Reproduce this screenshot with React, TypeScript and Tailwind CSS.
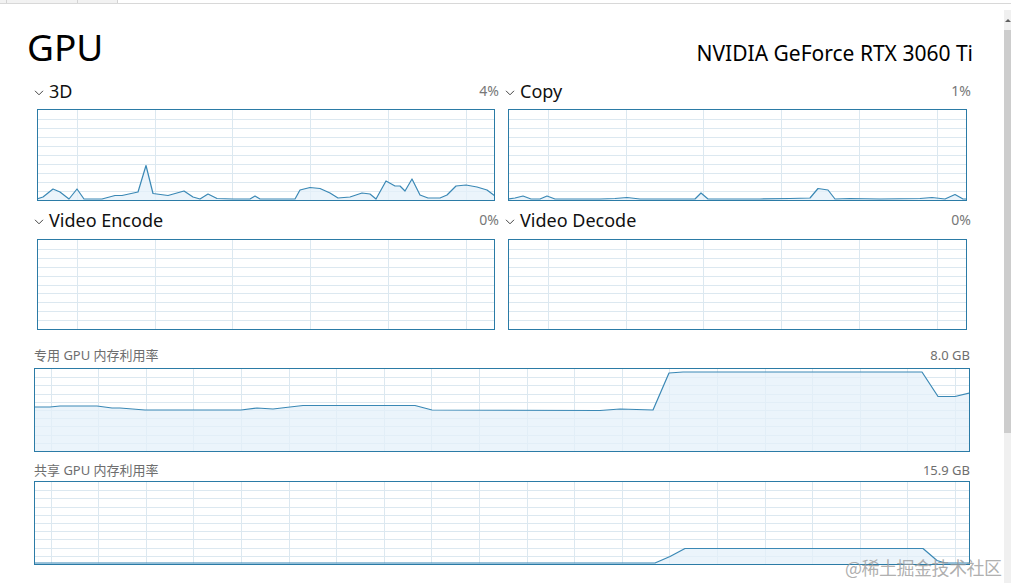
import React from 'react';

type Pt = [number, number];

const FONT = "font-['Noto_Sans','Noto_Sans_CJK_SC',sans-serif]";

// points are page coordinates, converted to the box's inner space
const Graph: React.FC<{
  left: number;
  top: number;
  w: number;
  h: number;
  pts: Pt[];
  colStart: number;
  colStep: number;
  className?: string;
}> = ({ left, top, w, h, pts, colStart, colStep, className = '' }) => {
  const iw = w - 2;
  const ih = h - 2;
  const local = pts.map(([x, y]) => [x - left - 1, y - top - 1] as Pt);
  const line = local.map(p => p.join(',')).join(' ');
  const area = `0,${ih} ${line} ${iw},${ih}`;
  const rows = Array.from({ length: 9 }, (_, i) => ((i + 1) * ih) / 10);
  const cols: number[] = [];
  for (let x = colStart; x < iw; x += colStep) cols.push(x);

  return (
    <div className={`border border-[#2b7ba6] bg-white ${className}`} style={{ width: w, height: h }}>
      <svg width={iw} height={ih} className="block">
        {rows.map(y => (
          <line key={'r' + y} x1={0} x2={iw} y1={Math.round(y) + 0.5} y2={Math.round(y) + 0.5} stroke="#dce8f0" strokeWidth={1} />
        ))}
        {cols.map(x => (
          <line key={'c' + x} x1={Math.round(x) + 0.5} x2={Math.round(x) + 0.5} y1={0} y2={ih} stroke="#dce8f0" strokeWidth={1} />
        ))}
        {pts.length > 0 && (
          <>
            <polygon points={area} fill="#e4f0f9" fillOpacity={0.75} />
            <polyline points={line} fill="none" stroke="#3a88b5" strokeWidth={1.2} strokeLinejoin="round" />
          </>
        )}
      </svg>
    </div>
  );
};

const Chevron = () => (
  <svg width="10" height="6" className="block">
    <polyline points="1,0.8 5,4.8 9,0.8" fill="none" stroke="#444" strokeWidth="1" />
  </svg>
);

const Header: React.FC<{ title: string; value: string }> = ({ title, value }) => (
  <div className="flex items-end justify-between h-[22px]">
    <div className="flex items-center">
      <div className="w-[16px] pt-[3px] pl-[1px]">
        <Chevron />
      </div>
      <span className="text-[18px] leading-[22px] text-[#111]">{title}</span>
    </div>
    <span className="text-[14px] leading-[18px] pb-[2px] text-[#777]">{value}</span>
  </div>
);

const p3d: Pt[] = [
  [37, 199], [43, 197], [53, 189], [60, 192], [69, 199], [77, 189], [84, 199], [102, 199],
  [115, 195.5], [122, 195.5], [138, 192], [146, 165.5], [153, 193.5], [168, 195.5], [184, 191],
  [193, 197], [200, 199], [208, 194], [217, 198.5], [233, 199], [250, 199], [255, 196], [260, 199],
  [295, 199], [300, 190], [310, 187.5], [320, 188.5], [330, 193], [338, 198], [350, 197],
  [362, 193], [370, 194], [376, 199], [386, 181], [395, 186], [400, 186], [405, 191], [412, 179],
  [420, 195], [428, 198], [440, 198], [447, 195], [456, 186], [466, 185], [477, 187], [487, 190], [495, 196],
];

const pCopy: Pt[] = [
  [508, 199], [515, 198], [523, 196], [531, 199], [540, 199], [547, 196], [555, 199], [600, 199],
  [615, 198.5], [627, 197.5], [640, 199], [695, 199], [701, 193], [708, 199], [760, 199],
  [790, 198.5], [810, 198], [818, 188.5], [828, 190], [835, 199], [850, 198.5], [880, 199],
  [920, 198.5], [932, 197.5], [945, 199], [955, 194.5], [963, 199], [967, 199],
];

const pVideo: Pt[] = [];

const pMem: Pt[] = [
  [34, 407], [50, 407], [60, 406], [97, 406], [112, 408], [120, 408], [145, 410], [241, 410],
  [257, 408], [273, 409], [290, 407], [303, 405.5], [415, 405.5], [432, 410], [600, 410.5],
  [620, 409], [653, 410], [669, 373], [683, 372], [922, 372], [938, 396.5], [955, 396.5], [970, 393],
];

const pShared: Pt[] = [
  [34, 563], [655, 563], [670, 556.5], [685, 548.5], [923, 548.5], [937, 560.5], [945, 563], [970, 563],
];

const App: React.FC = () => {
  return (
    <div className={`relative w-[1011px] h-[583px] overflow-hidden bg-white ${FONT}`}>
      {/* top tab strip */}
      <div className="h-[4px] border-b border-[#d8d8d8] flex">
        <div className="w-[7px] h-[3px] bg-[#f2f2f2] border-r border-[#d4d4d4]" />
        <div className="w-[71px] h-[3px] bg-[#f2f2f2] border-r border-[#d4d4d4]" />
        <div className="w-[40px] h-[3px] bg-[#f2f2f2] border-r border-[#d4d4d4]" />
      </div>

      <div className="flex">
        <div className="w-[1004px]">
          {/* title */}
          <div className="flex items-end justify-between pl-[27px] pr-[31px] h-[68px]">
            <span className="text-[37px] leading-[44px] pb-[3px] text-black">GPU</span>
            <span className="text-[21px] leading-[28px] pb-[5px] text-black">NVIDIA GeForce RTX 3060 Ti</span>
          </div>

          {/* engine graphs */}
          <div className="grid grid-cols-[466px_467px] gap-x-[5px] pl-[33px] mt-[8px]">
            <div>
              <Header title="3D" value="4%" />
              <Graph className="ml-[4px] mt-[7px]" left={37} top={109} w={458} h={92} pts={p3d} colStart={39} colStep={77.7} />
            </div>
            <div>
              <Header title="Copy" value="1%" />
              <Graph className="ml-[4px] mt-[7px]" left={508} top={109} w={459} h={92} pts={pCopy} colStart={39} colStep={77.7} />
            </div>
            <div className="mt-[8px]">
              <Header title="Video Encode" value="0%" />
              <Graph className="ml-[4px] mt-[8px]" left={37} top={239} w={458} h={91} pts={pVideo} colStart={39} colStep={77.7} />
            </div>
            <div className="mt-[8px]">
              <Header title="Video Decode" value="0%" />
              <Graph className="ml-[4px] mt-[8px]" left={508} top={239} w={459} h={91} pts={pVideo} colStart={39} colStep={77.7} />
            </div>
          </div>

          {/* memory graphs */}
          <div className="pl-[34px] w-[970px] mt-[16px]">
            <div className="flex justify-between items-end h-[18px] text-[13px] leading-[18px] text-[#6e6e6e]">
              <span>专用 GPU 内存利用率</span>
              <span>8.0 GB</span>
            </div>
            <Graph className="mt-[4px]" left={34} top={368} w={936} h={84} pts={pMem} colStart={15.5} colStep={47.6} />
            <div className="flex justify-between items-end h-[18px] mt-[9px] text-[13px] leading-[18px] text-[#6e6e6e]">
              <span>共享 GPU 内存利用率</span>
              <span>15.9 GB</span>
            </div>
            <Graph className="mt-[2px]" left={34} top={481} w={936} h={84} pts={pShared} colStart={15.5} colStep={47.6} />
          </div>
        </div>

        {/* scrollbar */}
        <div className="w-[7px] mt-[6px] h-[573px] flex flex-col bg-[#f0f0f0]">
          <div className="h-[20px] flex items-center justify-center">
            <div className="w-0 h-0 border-l-[3px] border-r-[3px] border-b-[3px] border-l-transparent border-r-transparent border-b-[#606060]" />
          </div>
          <div className="h-[403px] bg-[#cdcdcd]" />
          <div className="flex-1" />
        </div>
      </div>

      {/* watermark */}
      <div className="absolute left-[845px] top-[555px] text-[18px] leading-[24px] text-[#9a9a9a]/80 font-['Noto_Sans_CJK_SC',serif] tracking-[-0.5px]">
        @稀土掘金技术社区
      </div>
    </div>
  );
};

export default App;
